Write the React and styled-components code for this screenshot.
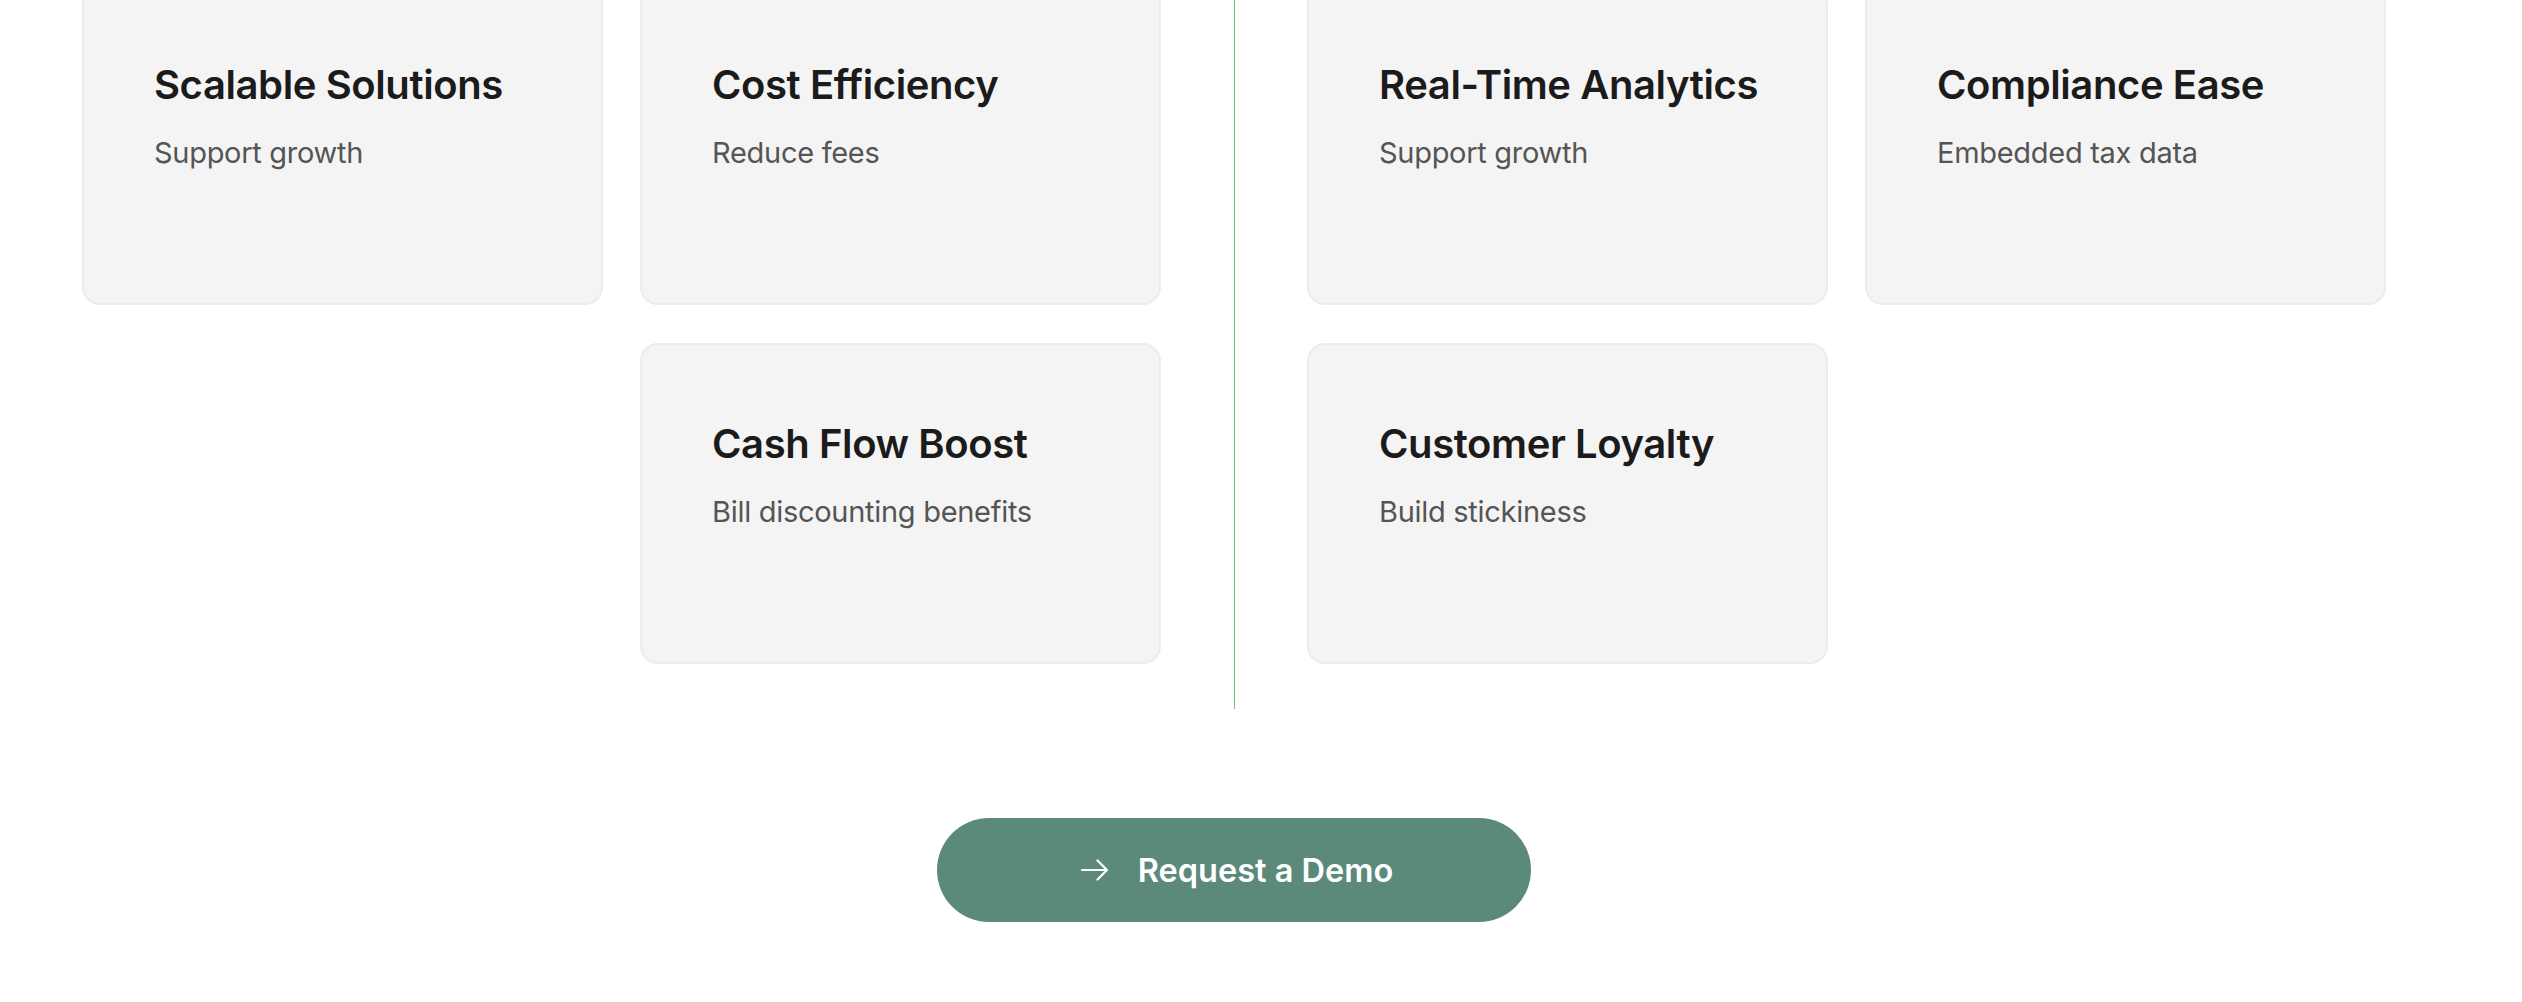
import React from "react";
import styled, { createGlobalStyle } from "styled-components";

const GlobalStyle = createGlobalStyle`
  html, body {
    margin: 0;
    padding: 0;
    background: #ffffff;
    font-family: Inter, "Noto Sans", "Liberation Sans", sans-serif;
    overflow: hidden;
  }
`;

const leftCards = [
  { title: "Scalable Solutions", text: "Support growth" },
  { title: "Cost Efficiency", text: "Reduce fees" },
  { title: "Cash Flow Boost", text: "Bill discounting benefits", col: 2 },
];

const rightCards = [
  { title: "Real-Time Analytics", text: "Support growth" },
  { title: "Compliance Ease", text: "Embedded tax data" },
  { title: "Customer Loyalty", text: "Build stickiness", col: 1 },
];

function ArrowIcon() {
  return (
    <svg width="28" height="22" viewBox="0 0 28 22" fill="none">
      <path
        d="M1 11h25M16.5 1.5L26 11l-9.5 9.5"
        stroke="currentColor"
        strokeWidth="2.2"
        strokeLinecap="round"
        strokeLinejoin="round"
      />
    </svg>
  );
}

function FeatureCard({ title, text, col }) {
  return (
    <S.Card $col={col}>
      <S.Title>{title}</S.Title>
      <S.Text>{text}</S.Text>
    </S.Card>
  );
}

export default function App() {
  return (
    <>
      <GlobalStyle />
      <S.Page>
        <S.Columns>
          <S.Group>
            {leftCards.map((c) => (
              <FeatureCard key={c.title} {...c} />
            ))}
          </S.Group>
          <S.Divider />
          <S.Group>
            {rightCards.map((c) => (
              <FeatureCard key={c.title} {...c} />
            ))}
          </S.Group>
        </S.Columns>
        <S.Actions>
          <S.DemoButton>
            <ArrowIcon />
            <span>Request a Demo</span>
          </S.DemoButton>
        </S.Actions>
      </S.Page>
    </>
  );
}

const S = {
  Page: styled.main`
    width: 2304px;
    margin: -16px 0 0 82px;
  `,

  Columns: styled.div`
    display: flex;
    align-items: stretch;
  `,

  Group: styled.div`
    display: grid;
    grid-template-columns: 521px 521px;
    grid-auto-rows: 321px;
    column-gap: 37px;
    row-gap: 38px;
    padding-bottom: 45px;
  `,

  Divider: styled.div`
    width: 1px;
    margin: 0 72px 0 73px;
    background: #5cd06c;
  `,

  Card: styled.div`
    grid-column: ${({ $col }) => ($col ? $col : "auto")};
    box-sizing: border-box;
    padding: 75px 40px 75px 70px;
    background: #f4f4f4;
    border: 2px solid #ececec;
    border-radius: 18px;
  `,

  Title: styled.h3`
    margin: 0;
    font-size: 40px;
    line-height: 48px;
    font-weight: 600;
    letter-spacing: -0.01em;
    white-space: nowrap;
    color: #1b1b1b;
  `,

  Text: styled.p`
    margin: 26px 0 0;
    font-size: 29px;
    line-height: 36px;
    font-weight: 400;
    letter-spacing: -0.01em;
    color: #555555;
  `,

  Actions: styled.div`
    display: flex;
    justify-content: center;
    margin-top: 109px;
  `,

  DemoButton: styled.button`
    display: flex;
    align-items: center;
    justify-content: center;
    gap: 29px;
    box-sizing: border-box;
    width: 594px;
    height: 104px;
    padding: 0 0 0 6px;
    border: none;
    border-radius: 52px;
    background: #5b8a7b;
    color: #ffffff;
    font-family: Inter, "Noto Sans", "Liberation Sans", sans-serif;
    font-size: 32.5px;
    font-weight: 600;
    letter-spacing: 0;
    cursor: pointer;
  `,
};
